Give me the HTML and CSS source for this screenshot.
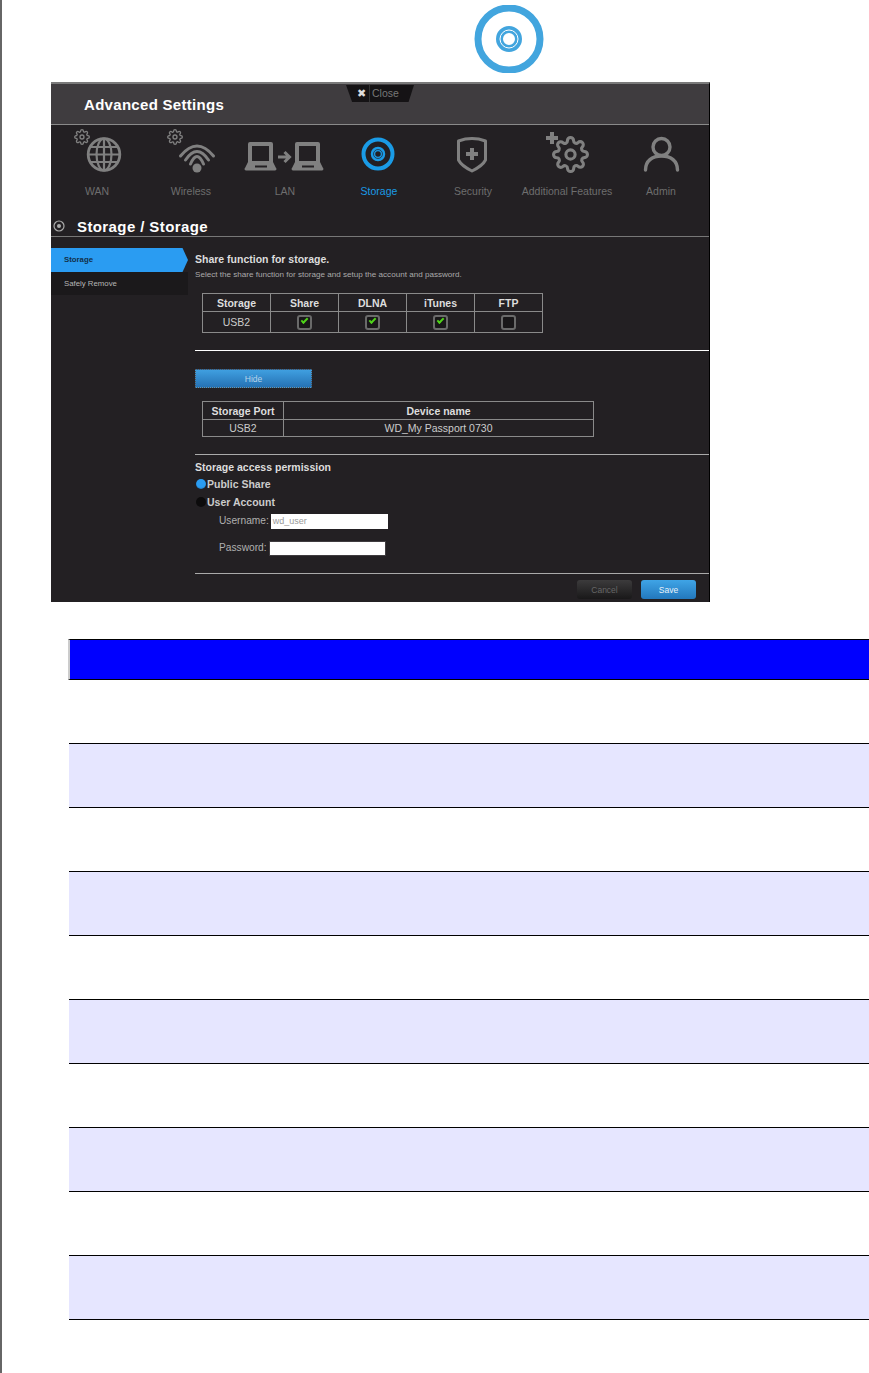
FILE: index.html
```html
<!DOCTYPE html>
<html lang="en">
<head>
    <meta charset="UTF-8">
    <meta name="viewport" content="width=device-width, initial-scale=1.0">
    <title>Advanced Settings - Storage</title>
    <link rel="stylesheet" href="styles.css">
</head>
<body>
    <svg class="defs" width="0" height="0" aria-hidden="true">
        <symbol id="gear" viewBox="0 0 24 24">
            <circle cx="12" cy="12" r="3" fill="none" stroke="currentColor" stroke-width="2"/>
            <path fill="none" stroke="currentColor" stroke-width="2" d="M19.4 15a1.65 1.65 0 0 0 .33 1.82l.06.06a2 2 0 0 1 0 2.83 2 2 0 0 1-2.83 0l-.06-.06a1.65 1.65 0 0 0-1.82-.33 1.65 1.65 0 0 0-1 1.51V21a2 2 0 0 1-2 2 2 2 0 0 1-2-2v-.09A1.65 1.65 0 0 0 9 19.4a1.65 1.65 0 0 0-1.82.33l-.06.06a2 2 0 0 1-2.83 0 2 2 0 0 1 0-2.83l.06-.06a1.65 1.65 0 0 0 .33-1.82 1.65 1.65 0 0 0-1.51-1H3a2 2 0 0 1-2-2 2 2 0 0 1 2-2h.09A1.65 1.65 0 0 0 4.6 9a1.65 1.65 0 0 0-.33-1.82l-.06-.06a2 2 0 0 1 0-2.83 2 2 0 0 1 2.83 0l.06.06a1.65 1.65 0 0 0 1.82.33H9a1.65 1.65 0 0 0 1-1.51V3a2 2 0 0 1 2-2 2 2 0 0 1 2 2v.09a1.65 1.65 0 0 0 1 1.51 1.65 1.65 0 0 0 1.82-.33l.06-.06a2 2 0 0 1 2.83 0 2 2 0 0 1 0 2.83l-.06.06a1.65 1.65 0 0 0-.33 1.82V9a1.65 1.65 0 0 0 1.51 1H21a2 2 0 0 1 2 2 2 2 0 0 1-2 2h-.09a1.65 1.65 0 0 0-1.51 1z"/>
        </symbol>
        <symbol id="laptop" viewBox="0 0 45 48">
            <path fill="#808080" fill-rule="evenodd" d="M5 9H28a2 2 0 0 1 2 2V29l3 6a1.5 1.5 0 0 1-1.5 2.5H3.5A1.5 1.5 0 0 1 2 35l3-6V11a2 2 0 0 1 2-2ZM9 13V28H26V13ZM12 32.5V34.5H24V32.5Z"/>
        </symbol>
    </svg>

    <!-- Storage icon above the screenshot -->
    <svg class="top-icon" viewBox="0 0 72 68" width="72" height="68">
        <circle cx="36" cy="34" r="31" fill="none" stroke="#42a5de" stroke-width="7"/>
        <circle cx="36" cy="34" r="9.5" fill="none" stroke="#42a5de" stroke-width="7"/>
        <circle cx="36" cy="34" r="9" fill="none" stroke="#fff" stroke-width="1"/>
    </svg>

    <div class="panel">
        <div class="close-tab"><span class="close-x">&#10006;</span><span class="close-label">Close</span></div>

        <div class="panel-head">Advanced Settings</div>

        <div class="nav">
            <div class="nav-item">
                <svg class="nav-icon" viewBox="0 0 94 48">
                    <use href="#gear" x="24" y="-4" width="16" height="16"/>
                    <g fill="none" stroke="#808080">
                        <circle cx="54" cy="21.5" r="15.8" stroke-width="2.8"/>
                        <ellipse cx="54" cy="21.5" rx="7.5" ry="15.8" stroke-width="2.2"/>
                        <path stroke-width="2.2" d="M54 6V37M38 21.5H70M41 14H67M41 29H67"/>
                    </g>
                </svg>
                <span>WAN</span>
            </div>
            <div class="nav-item">
                <svg class="nav-icon" viewBox="0 0 94 48">
                    <use href="#gear" x="23" y="-4" width="16" height="16"/>
                    <g fill="none" stroke="#808080" stroke-width="3" stroke-linecap="round">
                        <path d="M36.500 23Q53 3 69.500 23"/>
                        <path d="M41.500 27Q53 10 64.500 27"/>
                        <path d="M46.500 31Q53 16 59.500 31"/>
                    </g>
                    <circle cx="53" cy="35" r="4.500" fill="#808080"/>
                </svg>
                <span>Wireless</span>
            </div>
            <div class="nav-item">
                <svg class="nav-icon" viewBox="0 0 94 48">
                    <use href="#laptop" x="5" y="0" width="45" height="48"/>
                    <use href="#laptop" x="52" y="0" width="45" height="48"/>
                    <path fill="none" stroke="#808080" stroke-width="3" d="M40 24H51M46.500 19l5 5-5 5"/>
                </svg>
                <span>LAN</span>
            </div>
            <div class="nav-item active">
                <svg class="nav-icon" viewBox="0 0 94 48">
                    <circle cx="46" cy="21" r="14.5" fill="none" stroke="#1a9be6" stroke-width="4"/>
                    <circle cx="46" cy="21" r="5" fill="none" stroke="#1a9be6" stroke-width="4.500"/>
                    <circle cx="46" cy="21" r="4.500" fill="none" stroke="#232023" stroke-width=".7"/>
                </svg>
                <span>Storage</span>
            </div>
            <div class="nav-item">
                <svg class="nav-icon" viewBox="0 0 94 48">
                    <path fill="none" stroke="#808080" stroke-width="3" stroke-linejoin="round" d="M32.500 8C41 5 51 5 59.500 8V27C57 32 52 35 46 38C40 35 35 32 32.500 27Z"/>
                    <path fill="#808080" d="M44 15H48V19H52V23H48V27H44V23H40V19H44Z"/>
                </svg>
                <span>Security</span>
            </div>
            <div class="nav-item">
                <svg class="nav-icon" viewBox="0 0 94 48">
                    <use href="#gear" x="32" y="3" width="37" height="37"/>
                    <path fill="#808080" d="M30 -1H34V3H38V7H34V11H30V7H26V3H30Z"/>
                </svg>
                <span>Additional Features</span>
            </div>
            <div class="nav-item">
                <svg class="nav-icon" viewBox="0 0 94 48">
                    <g fill="none" stroke="#808080" stroke-width="3.400" stroke-linecap="round">
                        <circle cx="47.500" cy="14" r="8.500"/>
                        <path d="M31.500 37C31.500 28 38 23 47.500 23S63.500 28 63.500 37"/>
                    </g>
                </svg>
                <span>Admin</span>
            </div>
        </div>

        <div class="section-title">
            <svg viewBox="0 0 14 14" width="14" height="14">
                <circle cx="7" cy="7" r="5" fill="none" stroke="#aaa" stroke-width="1.2"/>
                <circle cx="7" cy="7" r="2" fill="#aaa"/>
            </svg>
            <span>Storage / Storage</span>
        </div>

        <div class="panel-body">
            <div class="side-menu">
                <div class="side-item current">Storage</div>
                <div class="side-item">Safely Remove</div>
            </div>

            <div class="content">
                <div class="block first">
                    <h2>Share function for storage.</h2>
                    <p class="hint">Select the share function for storage and setup the account and password.</p>
                    <table class="grid share-table">
                        <tr>
                            <th>Storage</th>
                            <th>Share</th>
                            <th>DLNA</th>
                            <th>iTunes</th>
                            <th>FTP</th>
                        </tr>
                        <tr>
                            <td>USB2</td>
                            <td><span class="check on"></span></td>
                            <td><span class="check on"></span></td>
                            <td><span class="check on"></span></td>
                            <td><span class="check"></span></td>
                        </tr>
                    </table>
                </div>

                <div class="block second">
                    <button class="hide-btn">Hide</button>
                    <table class="grid device-table">
                        <tr>
                            <th class="port-col">Storage Port</th>
                            <th>Device name</th>
                        </tr>
                        <tr>
                            <td>USB2</td>
                            <td>WD_My Passport 0730</td>
                        </tr>
                    </table>
                </div>

                <div class="block third">
                    <h3>Storage access permission</h3>
                    <div class="radio-row"><span class="radio selected"></span>Public Share</div>
                    <div class="radio-row"><span class="radio"></span>User Account</div>
                    <div class="field user-field">
                        <label>Username:</label>
                        <div class="input placeholder">wd_user</div>
                    </div>
                    <div class="field pass-field">
                        <label>Password:</label>
                        <div class="input"></div>
                    </div>
                </div>
            </div>
        </div>

        <div class="panel-foot">
            <button class="btn cancel">Cancel</button>
            <button class="btn save">Save</button>
        </div>
    </div>

    <!-- Empty table below the screenshot -->
    <div class="doc-table">
        <div class="doc-head"></div>
        <div class="doc-row"></div>
        <div class="doc-row"></div>
        <div class="doc-row"></div>
        <div class="doc-row"></div>
        <div class="doc-row"></div>
        <div class="doc-row"></div>
        <div class="doc-row"></div>
        <div class="doc-row"></div>
        <div class="doc-row"></div>
        <div class="doc-row"></div>
    </div>
</body>
</html>
```

FILE: styles.css
```css
/* --- Page --- */
html, body {
    margin: 0;
    background: #fff;
}

body {
    box-sizing: border-box;
    min-height: 100vh;
    border-left: 2px solid #666;
    font-family: "Liberation Sans", Arial, sans-serif;
    overflow-x: hidden;
}

.defs {
    position: absolute;
}

.top-icon {
    display: block;
    margin: 5px 0 9px 471px;
}

/* --- Dark panel --- */
.panel {
    position: relative;
    box-sizing: border-box;
    width: 659px;
    height: 520px;
    margin-left: 49px;
    background: #232023;
    border-top: 2px solid #7a7a7a;
    border-right: 1px solid #000;
}

.panel-head {
    box-sizing: border-box;
    height: 41px;
    padding: 11px 0 0 33px;
    background: #3f3c3f;
    border-bottom: 1px solid #8a8a8a;
    color: #fff;
    font-size: 15px;
    font-weight: bold;
    line-height: 20px;
    letter-spacing: .3px;
}

.close-tab {
    position: absolute;
    top: 1px;
    left: 295px;
    display: flex;
    align-items: center;
    width: 68px;
    height: 17px;
    background: #151315;
    clip-path: polygon(0 0, 100% 0, 92% 100%, 9% 100%);
    font-size: 10.5px;
}

.close-x {
    flex: none;
    width: 16px;
    margin-left: 7px;
    color: #ddd;
    font-size: 11px;
    text-align: center;
}

.close-label {
    padding-left: 2px;
    border-left: 1px solid #333;
    color: #777;
    line-height: 17px;
}

/* --- Nav icons --- */
.nav {
    display: grid;
    grid-template-columns: repeat(7, 94px);
    height: 87px;
    margin-left: -1px;
}

.nav-item {
    display: flex;
    flex-direction: column;
    align-items: center;
    padding-top: 8px;
    color: #6e6e6e;
    font-size: 10.5px;
    line-height: 12px;
}

.nav-icon {
    display: block;
    flex: none;
    width: 94px;
    height: 48px;
    margin-bottom: 4px;
    color: #808080;
    overflow: visible;
}

.nav-item.active {
    color: #1a9be6;
}

/* --- Section title --- */
.section-title {
    display: flex;
    align-items: center;
    box-sizing: border-box;
    height: 25px;
    padding-top: 4px;
    border-bottom: 1px solid #777;
    color: #fff;
    font-size: 15px;
    font-weight: bold;
    letter-spacing: .4px;
}

.section-title svg {
    margin-left: 1px;
}

.section-title span {
    margin-left: 11px;
}

/* --- Side menu + content --- */
.panel-body {
    display: flex;
    gap: 7px;
}

.side-menu {
    flex: none;
    width: 137px;
    margin-top: 11px;
    align-self: flex-start;
}

.side-item {
    box-sizing: border-box;
    height: 23px;
    padding-left: 13px;
    background: #1b191b;
    color: #b5b5b5;
    font-size: 7.8px;
    line-height: 23px;
}

.side-item.current {
    height: 24px;
    background: #2a9cf2;
    clip-path: polygon(0 0, 96% 0, 100% 50%, 96% 100%, 0 100%);
    color: #12304a;
    font-weight: bold;
}

.content {
    flex: 1;
    min-width: 0;
}

.block {
    box-sizing: border-box;
    border-bottom: 1px solid #aaa;
}

.block.first {
    height: 114px;
    padding-top: 16px;
    border-bottom-color: #fff;
}

.block.second {
    height: 104px;
    padding-top: 18px;
}

.block.third {
    height: 119px;
    padding-top: 6px;
}

h2, h3 {
    margin: 0;
    color: #ddd;
    font-size: 10.5px;
    font-weight: bold;
    line-height: 12px;
}

.hint {
    margin: 5px 0 0;
    color: #aaa;
    font-size: 8.1px;
    line-height: 10px;
}

/* --- Tables --- */
.grid {
    margin-left: 7px;
    border-collapse: collapse;
    table-layout: fixed;
    color: #ccc;
    font-size: 10.5px;
}

.grid th, .grid td {
    padding: 0;
    border: 1px solid #8a8a8a;
    text-align: center;
}

.grid th {
    height: 17px;
    font-weight: bold;
    color: #ddd;
}

.grid td {
    height: 20px;
}

.share-table {
    width: 341px;
    margin-top: 13px;
}

.device-table {
    width: 392px;
    margin-top: 13px;
}

.device-table td {
    height: 16px;
}

.port-col {
    width: 80px;
}

.check {
    position: relative;
    display: inline-block;
    box-sizing: border-box;
    width: 15px;
    height: 15px;
    vertical-align: middle;
    border: 2px solid #6a6a6a;
    border-radius: 3px;
    background: #191719;
}

.check.on::after {
    content: "";
    position: absolute;
    top: 1px;
    left: 2px;
    width: 5px;
    height: 2px;
    border-left: 2px solid #4fd31a;
    border-bottom: 2px solid #4fd31a;
    transform: rotate(-45deg);
}

/* --- Buttons --- */
.hide-btn {
    display: block;
    width: 117px;
    height: 19px;
    padding: 0;
    border: 1px dotted #555;
    background: linear-gradient(#3f9fe0, #2672b4);
    color: #b8d4ea;
    font-family: inherit;
    font-size: 8.5px;
}

.panel-foot {
    display: flex;
    justify-content: flex-end;
    gap: 9px;
    padding: 6px 13px 0 0;
}

.btn {
    width: 55px;
    height: 19px;
    padding: 0;
    border: 0;
    border-radius: 3px;
    font-family: inherit;
    font-size: 8.5px;
}

.cancel {
    background: linear-gradient(#3c3b3c, #191819);
    color: #666;
}

.save {
    background: linear-gradient(#3fa4e6, #2378bd);
    color: #e8f2fa;
}

/* --- Permission form --- */
.radio-row {
    display: flex;
    align-items: center;
    height: 18px;
    margin-top: 2px;
    color: #ccc;
    font-size: 10.5px;
    font-weight: bold;
}

.radio-row + .radio-row {
    margin-top: 0;
}

.radio {
    flex: none;
    width: 10px;
    height: 10px;
    margin: 0 1px;
    border-radius: 50%;
    background: #0c0b0c;
}

.radio.selected {
    background: radial-gradient(circle at 50% 40%, #2a9cf2 55%, #14507e);
}

.field {
    display: flex;
    align-items: center;
    color: #b0b0b0;
    font-size: 10.2px;
}

.field label {
    margin: 0 0 2px 24px;
}

.input {
    box-sizing: border-box;
    width: 117px;
    height: 15px;
    margin-left: 2px;
    background: #fff;
    font-size: 9px;
    line-height: 15px;
}

.user-field {
    margin-top: 3px;
}

.user-field .input {
    padding-left: 2px;
}

.pass-field {
    margin-top: 12px;
}

.pass-field .input {
    border: 1px solid #3f3c3f;
}

.placeholder {
    color: #999;
}

/* --- Document table --- */
.doc-table {
    margin: 37px 0 0 67px;
}

.doc-head {
    box-sizing: border-box;
    height: 41px;
    margin-left: -1px;
    background: #00f;
    border-top: 1px solid #000;
    border-bottom: 1px solid #000;
    border-left: 2px solid #ccc;
}

.doc-row {
    box-sizing: border-box;
    height: 64px;
    border-bottom: 1px solid #000;
}

.doc-row:nth-child(odd) {
    background: #e6e6ff;
}
```
